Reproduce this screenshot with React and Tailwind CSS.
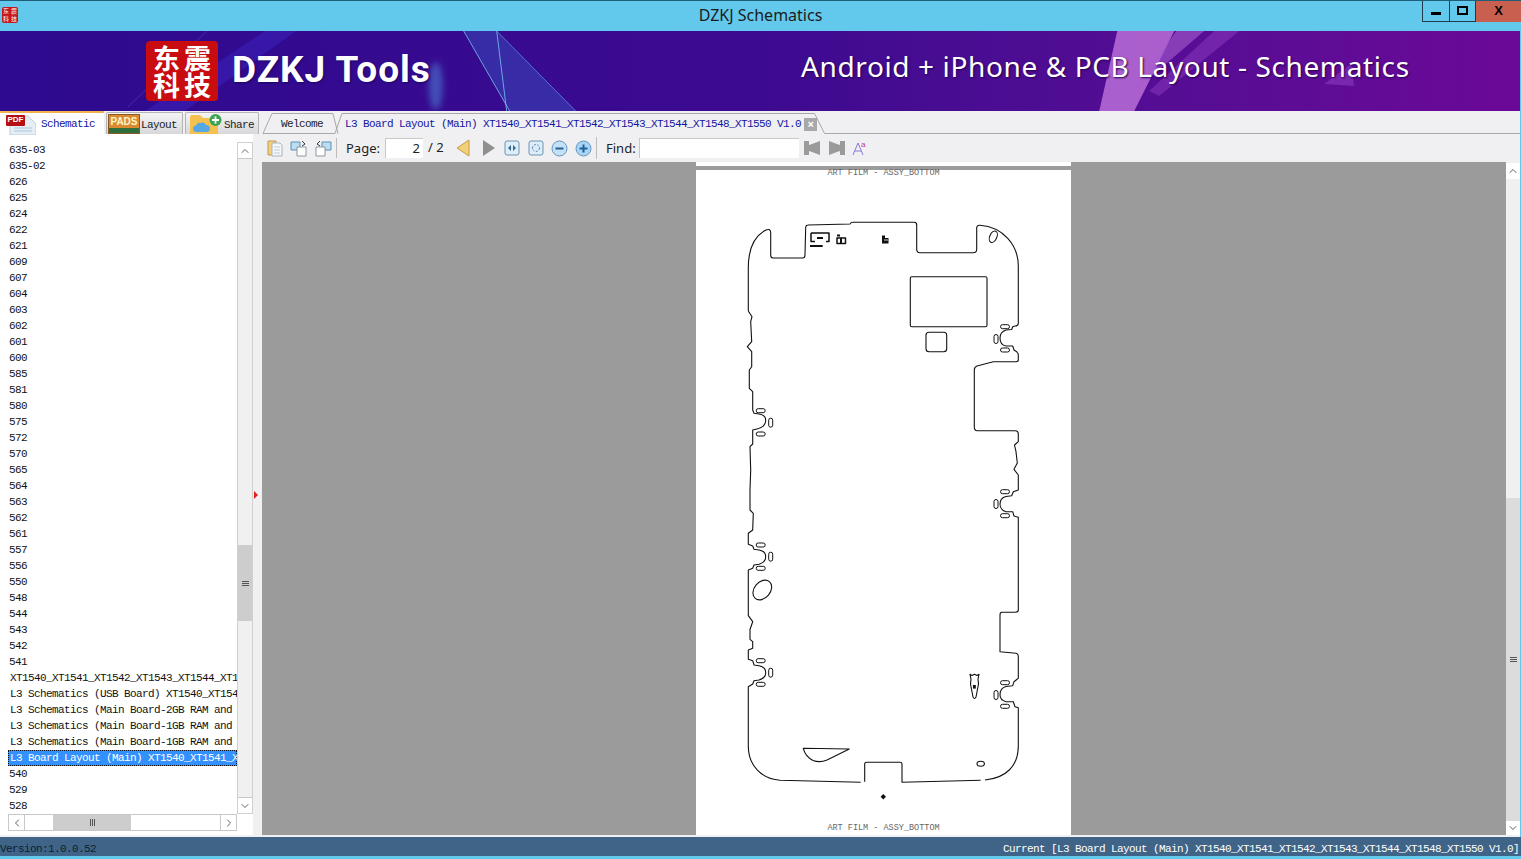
import React from 'react';
import { ChevronUp, ChevronDown, ChevronLeft, ChevronRight } from 'lucide-react';

const listItems = [
  '635-03', '635-02', '626', '625', '624', '622', '621', '609', '607', '604', '603', '602', '601', '600', '585', '581', '580',
  '575', '572', '570', '565', '564', '563', '562', '561', '557', '556', '550', '548', '544', '543', '542', '541',
];

const longItems = [
  'XT1540_XT1541_XT1542_XT1543_XT1544_XT1548_XT1550',
  'L3 Schematics (USB Board) XT1540_XT1541_XT1542',
  'L3 Schematics (Main Board-2GB RAM and 16GB ROM)',
  'L3 Schematics (Main Board-1GB RAM and 8GB ROM)',
  'L3 Schematics (Main Board-1GB RAM and 16GB ROM)',
];

const outline =
  'M748.3 311 V268 C748.3 250 754 236 766 230 Q770.7 228 770.7 233 V255 Q770.7 258 773 258 H802.7 Q805 258 805 255 L805.7 227 Q806 225 808 225 L850 224 Q851 222.3 853 222.3 H914 Q916.7 222.3 916.7 225 V249.3 Q916.7 252.7 920 252.7 H973.3 Q976.7 252.7 976.7 249.3 V228 Q976.7 225 980 225.3 C1003 227 1018.3 245 1018.3 266 V323.3 Q1018.3 326 1015 326 L1012.7 326.7 L1011.7 329.5 L1006 330 Q1000 332 1000 338 Q1000 345 1006 346 L1012.7 346 L1014 350 L1016.7 351.7 L1018.3 354 V360 Q1018.3 361.7 1016 361.7 H993.3 L977 366 Q974.3 367 974.3 370 V426.7 Q974.3 430.7 977.3 430.7 H1015 Q1018.3 430.7 1018.3 434 V441.7 L1014.5 445 L1016 451.7 L1017.3 463 L1014 469.3 L1018.3 475 V490 L1013.3 491.7 L1011.7 495.7 L1006 496.5 Q1000 498 1000 504 Q1000 510 1006 511.7 H1012.7 L1014 516 L1018.3 517.3 V610 Q1018.3 612.3 1015 612.3 H1002 Q1000 612.3 1000 615 V651.7 L1016 653.3 Q1018.3 654 1018.3 656 V678.3 L1014 681.7 L1012.7 685.7 L1006 686.5 Q1000 688 1000 695 Q1000 700 1006 701.7 H1013.3 L1015 706.7 L1018.3 707.7 V746 C1018.3 766 1006 778 985 780 M980.7 780.3 L902 782.3 V764 Q902 762.3 900 762.3 H866.7 Q864.7 762.3 864.7 764 V781.7 M860.7 782.3 L780 780.3 C762 779 748.3 766 748.3 746 V686.7 L752.7 684 L754 680.7 L759 680 Q765.7 678 765.7 672.7 Q765.7 667 759 665.7 L754 665 L752.7 660.7 L748.3 659.3 V650 L752.7 648.3 V641.7 L750 639.3 V629.5 L752.7 621.7 L748.3 615.7 V570 L752.7 568.3 L754 565 L759 564.3 Q765.7 562 765.7 556.7 Q765.7 551 759 550 L754 549.3 L752.7 546 L748.3 544.3 V533.3 L752.7 530 L753.3 513.3 L750 510 V490 L750.7 470 L750 446.7 L752.7 444 V430 L757 429 Q765.7 427 765.7 420 Q765.7 415 759 414 L754 413.3 L752.7 410 V391.7 L749.3 388.3 V370 L751.7 366.7 V351.7 L747.3 346.7 L751.7 341.7 L750.7 321.7 L752 316.7 L748.3 311';

const slots = [
  [1005, 326.7], [1005, 350], [1005, 491.7], [1005, 515.7], [1005, 682.7], [1005, 706.3],
  [760.7, 410.7], [760.7, 434], [760.7, 545], [760.7, 568.3], [760.7, 660.7], [760.7, 684.3],
];
const vSlots = [[996, 339], [996, 504], [996, 695], [770.7, 422.7], [770.7, 556.7], [770.7, 672.7]];

const BoardDrawing = () => (
  <svg viewBox="696 176 375 646" className="block h-[646px] w-[375px]" fill="none" stroke="#111" strokeWidth="1.1" strokeLinejoin="round">
    <path d={outline} />
    {slots.map(([x, y]) => (
      <rect key={`${x}-${y}`} x={x - 4.5} y={y - 2} width="9" height="4" rx="2" strokeWidth="1" />
    ))}
    {vSlots.map(([x, y]) => (
      <rect key={`${x}-${y}`} x={x - 2} y={y - 4.5} width="4" height="9" rx="2" strokeWidth="1" />
    ))}
    <rect x="910.3" y="276.7" width="76.7" height="50" rx="1.5" />
    <rect x="926" y="332.3" width="20.7" height="19.4" rx="3" />
    <ellipse cx="993.3" cy="236.7" rx="3.5" ry="6" transform="rotate(25 993.3 236.7)" />
    <ellipse cx="762.3" cy="590" rx="8" ry="11" transform="rotate(40 762.3 590)" />
    <ellipse cx="980.7" cy="763.7" rx="3.7" ry="2.5" />
    <path d="M803.3 748.3 L849.3 749 L827 760 Q820 763 813 760.5 Q805 756 803.3 748.3 Z" />
    <path d="M970 674.3 L972 675.5 L974.5 674.3 L977 675.5 L979 674.3 L978 679 L978.5 684 L976 697 Q974.5 700 973 697 L970.5 684 L971 679 Z" />
    <rect x="973" y="685" width="2.8" height="3.6" fill="#111" stroke="none" />
    <path d="M883.3 794 L886 796.7 L883.3 799.4 L880.6 796.7 Z" fill="#111" stroke="none" />
    <path d="M811 233 H829 V241.5 H826 M811 233 V241.5 H815" strokeWidth="1.5" />
    <rect x="817" y="237" width="6" height="2" fill="#111" stroke="none" />
    <rect x="810" y="245" width="12.7" height="2" fill="#111" stroke="none" />
    <rect x="837" y="238" width="8.5" height="5.5" strokeWidth="1.5" />
    <rect x="837" y="234.5" width="3" height="2" fill="#111" stroke="none" />
    <rect x="840" y="238" width="2" height="5.5" fill="#111" stroke="none" />
    <path d="M882 235.5 H885 V238 H888.5 V243.5 H882 Z" fill="#111" stroke="none" />
    <path d="M884 240 H888" stroke="#fff" strokeWidth="0.8" />
  </svg>
);

const BannerArt = () => (
  <svg viewBox="0 0 1521 80" preserveAspectRatio="none" className="absolute inset-0 h-full w-full" fill="none">
    <path d="M265 0 H296 L185 80 H145 Z" fill="#3a20b8" opacity="0.6" />
    <path d="M207 0 L128 76" stroke="#4a3bb0" opacity="0.7" />
    <path d="M464 0 H497 L576 80 H510 Z" fill="#3c6ad0" opacity="0.35" />
    <path d="M464 0 L510 80 M497 0 L507 80" stroke="#7cc4ee" opacity="0.8" />
    <path d="M497 0 L576 80" stroke="#5a8ae0" opacity="0.8" />
    <ellipse cx="436" cy="55" rx="7" ry="24" fill="#4f86d8" opacity="0.55" className="blur-[3px]" />
    <path d="M1118 0 H1175 L1135 80 H1100 Z" fill="#c77be0" opacity="0.75" />
    <path d="M1177 0 H1205 L1135 60 Z" fill="#a95bd0" opacity="0.6" />
    <path d="M1215 0 H1240 L1160 65 L1150 60 Z" fill="#8d3cc0" opacity="0.5" />
    <path d="M1325 53 L1352 33 L1355 55 Z" fill="#8b3ac0" opacity="0.6" />
  </svg>
);

const TabOutline = () => (
  <svg viewBox="0 0 1259 23" preserveAspectRatio="none" className="absolute inset-0 h-full w-full" fill="none" stroke="#a8a8a8">
    <path d="M1 22.5 L10 2.5 H71 L76 22.5 M73 22.5 L80 2.5 H553 L563 22.5 H1259 M1 22.5 H73" />
  </svg>
);

const PdfIcon = () => (
  <div className="relative h-[22px] w-[30px] shrink-0">
    <svg viewBox="0 0 30 22" className="absolute inset-0 h-full w-full">
      <path d="M4 3 H22 L30 11 V22 H4 Z" fill="#e6eef5" stroke="#b4c4d2" strokeWidth="0.8" />
      <path d="M8 15 H26 M8 18 H26" stroke="#a9c6de" strokeWidth="1.2" />
    </svg>
    <div className="absolute left-0 top-[2px] flex h-[11px] w-[19px] items-center justify-center rounded-[1px] bg-[#b50f14] font-['Liberation_Sans',sans-serif] text-[8px] font-bold text-white">
      PDF
    </div>
  </div>
);

const PadsIcon = () => (
  <div className="flex h-[20px] w-[32px] shrink-0 flex-col self-end border border-[#8a5a22] bg-[#d98a32]">
    <div className="h-[13px] text-center font-['Liberation_Sans',sans-serif] text-[10px] font-bold leading-[13px] text-[#fff6c8]">PADS</div>
    <div className="flex-1 bg-[#2f6d3b]" />
  </div>
);

const ShareIcon = () => (
  <svg viewBox="0 0 32 21" className="h-[21px] w-[32px] shrink-0 self-end">
    <path d="M0 4 Q0 2 2 2 H10 L13 5 H28 V21 H0 Z" fill="#f4c04e" />
    <path d="M7 19 Q3 19 3 15.5 Q3 13 6 12.5 Q7 9 11 10 Q14 8.5 16 12 Q20 12 20 15.5 Q20 19 16 19 Z" fill="#56a8e4" />
    <circle cx="25.5" cy="7" r="6" fill="#3fa452" />
    <path d="M25.5 3.5 V10.5 M22 7 H29" stroke="#fff" strokeWidth="1.8" />
  </svg>
);

const DocIcon = ({ variant }) => (
  <svg viewBox="0 0 18 18" className="h-[18px] w-[18px]" fill="none">
    {variant === 'stack' ? (
      <>
        <path d="M2 2 H10 V16 H2 Z" fill="#f2cf86" stroke="#c59a4a" />
        <path d="M6 4 H14 L16 6 V17 H6 Z" fill="#f4f6f8" stroke="#a9b4bf" />
        <path d="M8 8 H14 M8 11 H14 M8 14 H14" stroke="#c4ccd4" />
      </>
    ) : variant === 'next' ? (
      <>
        <path d="M1 3 H10 V11 H1 Z" fill="#bcdcf2" stroke="#5f8fb4" />
        <path d="M7 8 H16 V17 H7 Z" fill="#fff" stroke="#8a97a3" />
        <path d="M12 2 L15 5 L12 7" stroke="#333" />
      </>
    ) : (
      <>
        <path d="M8 3 H17 V11 H8 Z" fill="#bcdcf2" stroke="#5f8fb4" />
        <path d="M2 8 H11 V17 H2 Z" fill="#fff" stroke="#8a97a3" />
        <path d="M6 2 L3 5 L6 7" stroke="#333" />
      </>
    )}
  </svg>
);

const FitIcon = ({ both }) => (
  <svg viewBox="0 0 16 16" className="h-4 w-4">
    <rect x="1" y="1" width="14" height="14" rx="2" fill="#dcecf8" stroke="#6d94b4" />
    <path d="M7 5 L4 8 L7 11 Z M9 5 L12 8 L9 11 Z" fill="#35658c" />
    {both && <rect x="5" y="5" width="6" height="6" fill="#dcecf8" />}
    {both && <circle cx="8" cy="8" r="3.5" fill="none" stroke="#5f8fb4" strokeDasharray="2 1.5" />}
  </svg>
);

const ZoomIcon = ({ plus }) => (
  <svg viewBox="0 0 17 17" className="h-[17px] w-[17px]">
    <circle cx="8.5" cy="8.5" r="7.5" fill={plus ? '#a9d4f2' : '#c4e0f4'} stroke="#5f97c4" />
    <path d={plus ? 'M4.5 8.5 H12.5 M8.5 4.5 V12.5' : 'M4.5 8.5 H12.5'} stroke="#1e5f9c" strokeWidth="2" />
  </svg>
);

const BinocIcon = ({ flip }) => (
  <svg viewBox="0 0 16 16" className={`h-4 w-4 ${flip ? '-scale-x-100' : ''}`}>
    <path d="M0 1 H5 V5 L8 4 V12 L5 11 V15 H0 Z M8 4 L16 1 V15 L8 12 Z" fill="#9a9a9a" />
  </svg>
);

const TabLabel = ({ className = '', children }) => (
  <span className={`font-['Liberation_Mono',monospace] text-[11px] leading-[14px] tracking-[-0.6px] ${className}`}>{children}</span>
);

const Scrollbar = () => (
  <div className="flex w-[16px] shrink-0 flex-col border border-[#d0d0d0] bg-[#f0f0f0]">
    <div className="flex h-[16px] items-center justify-center border-b border-[#c8c8c8] bg-white">
      <ChevronUp size={12} color="#606060" />
    </div>
    <div className="h-[386px]" />
    <div className="flex h-[76px] flex-col items-center justify-center gap-px bg-[#cdcdcd]">
      <span className="h-px w-[7px] bg-[#555]" />
      <span className="h-px w-[7px] bg-[#555]" />
      <span className="h-px w-[7px] bg-[#555]" />
    </div>
    <div className="flex-1" />
    <div className="flex h-[16px] items-center justify-center border-t border-[#c8c8c8] bg-white">
      <ChevronDown size={12} color="#606060" />
    </div>
  </div>
);

const SidePanel = () => (
  <div className="flex w-[253px] shrink-0 flex-col bg-white pl-[8px] pt-[8px]">
    <div className="flex h-[672px]">
      <div className="w-[229px] overflow-hidden whitespace-nowrap font-['Liberation_Mono',monospace] text-[11px] leading-[16px] tracking-[-0.6px] text-[#111]">
        {listItems.map((item) => (
          <div key={item} className="h-[16px] pl-[1px]">{item}</div>
        ))}
        {longItems.map((item) => (
          <div key={item} className="h-[16px] pl-[2px]">{item}</div>
        ))}
        <div className="h-[16px] border border-dotted border-[#111] bg-[#3390ff] pl-[1px] leading-[14px] text-white">
          L3 Board Layout (Main) XT1540_XT1541_XT1542
        </div>
        <div className="h-[16px] pl-[1px]">540</div>
        <div className="h-[16px] pl-[1px]">529</div>
        <div className="h-[16px] pl-[1px]">528</div>
      </div>
      <Scrollbar />
    </div>
    <div className="flex h-[17px] w-[229px] border border-[#c8c8c8] bg-[#f0f0f0]">
      <div className="flex w-[16px] items-center justify-center border-r border-[#c8c8c8] bg-white">
        <ChevronLeft size={12} color="#606060" />
      </div>
      <div className="w-[28px] bg-white" />
      <div className="flex w-[78px] items-center justify-center gap-px bg-[#cdcdcd]">
        <span className="h-[7px] w-px bg-[#555]" />
        <span className="h-[7px] w-px bg-[#555]" />
        <span className="h-[7px] w-px bg-[#555]" />
      </div>
      <div className="flex-1 bg-white" />
      <div className="flex w-[16px] items-center justify-center border-l border-[#c8c8c8] bg-white">
        <ChevronRight size={12} color="#606060" />
      </div>
    </div>
    <div className="flex-1" />
  </div>
);

const Toolbar = () => (
  <div className="flex h-[28px] items-center bg-[#f0f0f2] font-['Noto_Sans',sans-serif] text-[13px] text-[#222]">
    <div className="ml-[4px] flex w-[70px] gap-[6px]">
      <DocIcon variant="stack" />
      <DocIcon variant="next" />
      <DocIcon variant="prev" />
    </div>
    <div className="h-[20px] w-px bg-[#bcbcbc]" />
    <span className="ml-[9px] w-[39px] pt-px">Page:</span>
    <div className="h-[20px] w-[38px] border-l border-t border-[#c8c8c8] bg-white pr-[3px] text-right leading-[18px]">2</div>
    <span className="ml-[5px] w-[28px]">/ 2</span>
    <svg viewBox="0 0 14 18" className="h-[18px] w-[14px]">
      <path d="M13 1 V17 L1 9 Z" fill="#f1d27c" stroke="#c49a38" />
    </svg>
    <svg viewBox="0 0 12 16" className="ml-[13px] h-[16px] w-[12px]">
      <path d="M0 0 L12 8 L0 16 Z" fill="#8f8f8f" />
    </svg>
    <div className="ml-[9px] flex items-center gap-[8px]">
      <FitIcon />
      <FitIcon both />
    </div>
    <div className="ml-[7px] flex items-center gap-[7px]">
      <ZoomIcon />
      <ZoomIcon plus />
    </div>
    <div className="ml-[4px] h-[22px] w-px bg-[#bcbcbc]" />
    <span className="ml-[9px] w-[33px] pt-px">Find:</span>
    <div className="h-[20px] w-[160px] border-l border-t border-[#c8c8c8] bg-white" />
    <div className="ml-[5px] flex items-center gap-[9px]">
      <BinocIcon />
      <BinocIcon flip />
    </div>
    <svg viewBox="0 0 16 16" className="ml-[7px] h-4 w-4" fill="none">
      <path d="M1 15 L6 3 L11 15 M3 11 H9" stroke="#8a7ad8" />
      <text x="9" y="7" fontSize="8" fill="#c0389a" fontFamily="Liberation Sans">a</text>
    </svg>
  </div>
);

const Viewer = () => (
  <div className="flex min-h-0 flex-1 bg-[#9b9b9b]">
    <div className="flex-1 pl-[434px]">
      <div className="flex h-full w-[375px] flex-col overflow-hidden bg-white text-center font-['Liberation_Mono',monospace] text-[8.5px] text-[#666]">
        <div className="h-[4px] shrink-0" />
        <div className="h-[4px] shrink-0 bg-[#9b9b9b]" />
        <div className="h-[6px] shrink-0 leading-[7px]">ART FILM - ASSY_BOTTOM</div>
        <BoardDrawing />
        <div className="leading-[12px]">ART FILM - ASSY_BOTTOM</div>
      </div>
    </div>
    <div className="flex w-[14px] shrink-0 flex-col bg-[#f0f0f0] pt-px">
      <div className="flex h-[16px] items-center justify-center bg-white">
        <ChevronUp size={12} color="#606060" />
      </div>
      <div className="h-[319px]" />
      <div className="flex h-[323px] flex-col items-center justify-center gap-px bg-[#dcdcdc]">
        <span className="h-px w-[7px] bg-[#555]" />
        <span className="h-px w-[7px] bg-[#555]" />
        <span className="h-px w-[7px] bg-[#555]" />
      </div>
      <div className="flex flex-1 items-center justify-center bg-white">
        <ChevronDown size={12} color="#606060" />
      </div>
    </div>
  </div>
);

export default function App() {
  return (
    <div className="flex h-[859px] w-[1521px] flex-col overflow-hidden bg-[#63c9ec] pb-[3px] pr-px">
      {/* title bar */}
      <div className="-mr-px grid h-[31px] shrink-0 grid-cols-[1fr_auto_1fr] border-t border-[#1f5d78]">
        <div className="pl-[2px] pt-[6px]">
          <div className="grid h-[16px] w-[16px] grid-cols-2 rounded-[2px] bg-[#c4161c] text-center font-['Noto_Sans_CJK_SC',sans-serif] text-[6px] leading-[8px] text-white">
            <span>东</span><span>震</span><span>科</span><span>技</span>
          </div>
        </div>
        <div className="pt-[4px] font-['Noto_Sans',sans-serif] text-[16px] leading-[20px] text-[#1c1c1c]">DZKJ Schematics</div>
        <div className="flex justify-end">
          <div className="flex h-[21px] w-[28px] items-center justify-center border-x border-b border-[#1f3a4a]">
            <span className="mt-[4px] h-[3px] w-[10px] bg-black" />
          </div>
          <div className="flex h-[21px] w-[26px] items-center justify-center border-b border-r border-[#1f3a4a]">
            <span className="mb-[2px] h-[9px] w-[11px] border-2 border-black" />
          </div>
          <div className="h-[21px] w-[45px] bg-[#c9604f] text-center font-['Liberation_Sans',sans-serif] text-[13px] font-bold leading-[20px] text-black">X</div>
        </div>
      </div>

      {/* banner */}
      <div className="relative h-[80px] shrink-0 overflow-hidden bg-gradient-to-r from-[#2d0a8f] via-[#3c0a90] to-[#6b0898]">
        <BannerArt />
        <div className="relative flex h-full items-center pl-[146px]">
          <div className="grid h-[60px] w-[72px] grid-cols-2 place-items-center rounded-[4px] bg-[#c80c0f] px-[5px] py-[3px] font-['Noto_Sans_CJK_SC',sans-serif] text-[27px] font-bold leading-[27px] text-white">
            <span>东</span><span>震</span><span>科</span><span>技</span>
          </div>
          <span className="mb-[3px] ml-[14px] w-[569px] font-['Roboto',sans-serif] text-[37px] font-bold tracking-[1px] text-white [text-shadow:1px_1px_2px_#1a0660]">DZKJ Tools</span>
          <span className="mb-[10px] font-['Noto_Sans',sans-serif] text-[28px] tracking-[0.62px] text-white [text-shadow:1px_1px_2px_#25004f]">Android + iPhone &amp; PCB Layout - Schematics</span>
        </div>
      </div>

      {/* tabs + content */}
      <div className="flex min-h-0 flex-1 flex-col bg-[#f0f0f2] pb-[2px]">
        <div className="flex min-h-0 flex-1">
          <div className="flex w-[262px] shrink-0 flex-col">
            <div className="flex h-[23px] shrink-0 items-end bg-[#f0f0f2]">
              <div className="flex h-[23px] w-[104px] items-center gap-[5px] border-t-2 border-[#f2b24c] bg-white pl-[6px]">
                <PdfIcon />
                <TabLabel className="pt-px text-[#1414a0]">Schematic</TabLabel>
              </div>
              <div className="ml-[2px] flex h-[22px] w-[77px] items-center gap-px rounded-t-[2px] border border-b-0 border-[#b4b4b4] bg-gradient-to-b from-[#f4f4f6] to-[#d8d8dc] pl-px">
                <PadsIcon />
                <TabLabel className="pt-[2px] text-[#222]">Layout</TabLabel>
              </div>
              <div className="ml-[2px] flex h-[22px] w-[74px] items-center gap-[2px] rounded-t-[2px] border border-b-0 border-[#b4b4b4] bg-gradient-to-b from-[#f4f4f6] to-[#d8d8dc] pl-[4px]">
                <ShareIcon />
                <TabLabel className="pt-[2px] text-[#222]">Share</TabLabel>
              </div>
            </div>
            <div className="flex min-h-0 flex-1 bg-[#f0f0f2]">
              <SidePanel />
              <div className="relative w-[9px] shrink-0 bg-[#f0f0f2]">
                <span className="absolute left-[1px] top-[357px] h-0 w-0 border-y-[4px] border-l-[4px] border-y-transparent border-l-[#e02020]" />
              </div>
            </div>
          </div>

          <div className="flex min-w-0 flex-1 flex-col">
            <div className="relative flex h-[23px] shrink-0 items-center pl-[1px] pt-[3px]">
              <TabOutline />
              <div className="relative flex w-[74px] justify-center pl-[4px]">
                <TabLabel className="text-[#222]">Welcome</TabLabel>
              </div>
              <div className="relative flex items-center pl-[8px]">
                <TabLabel className="whitespace-nowrap text-[#1414a0]">L3 Board Layout (Main) XT1540_XT1541_XT1542_XT1543_XT1544_XT1548_XT1550 V1.0</TabLabel>
                <span className="ml-[3px] flex h-[13px] w-[13px] items-center justify-center bg-[#a8a8a8] font-['Liberation_Sans',sans-serif] text-[11px] font-bold leading-none text-white">×</span>
              </div>
            </div>
            <Toolbar />
            <Viewer />
          </div>
        </div>
      </div>

      {/* status bar */}
      <div className="-mr-px flex h-[19px] shrink-0 justify-between bg-[#3f6488] pr-[2px] pt-[6px] font-['Liberation_Mono',monospace] text-[11px] leading-[12px] tracking-[-0.6px]">
        <span className="text-[#10202c]">Version:1.0.0.52</span>
        <span className="text-white">Current [L3 Board Layout (Main) XT1540_XT1541_XT1542_XT1543_XT1544_XT1548_XT1550 V1.0]</span>
      </div>
    </div>
  );
}
